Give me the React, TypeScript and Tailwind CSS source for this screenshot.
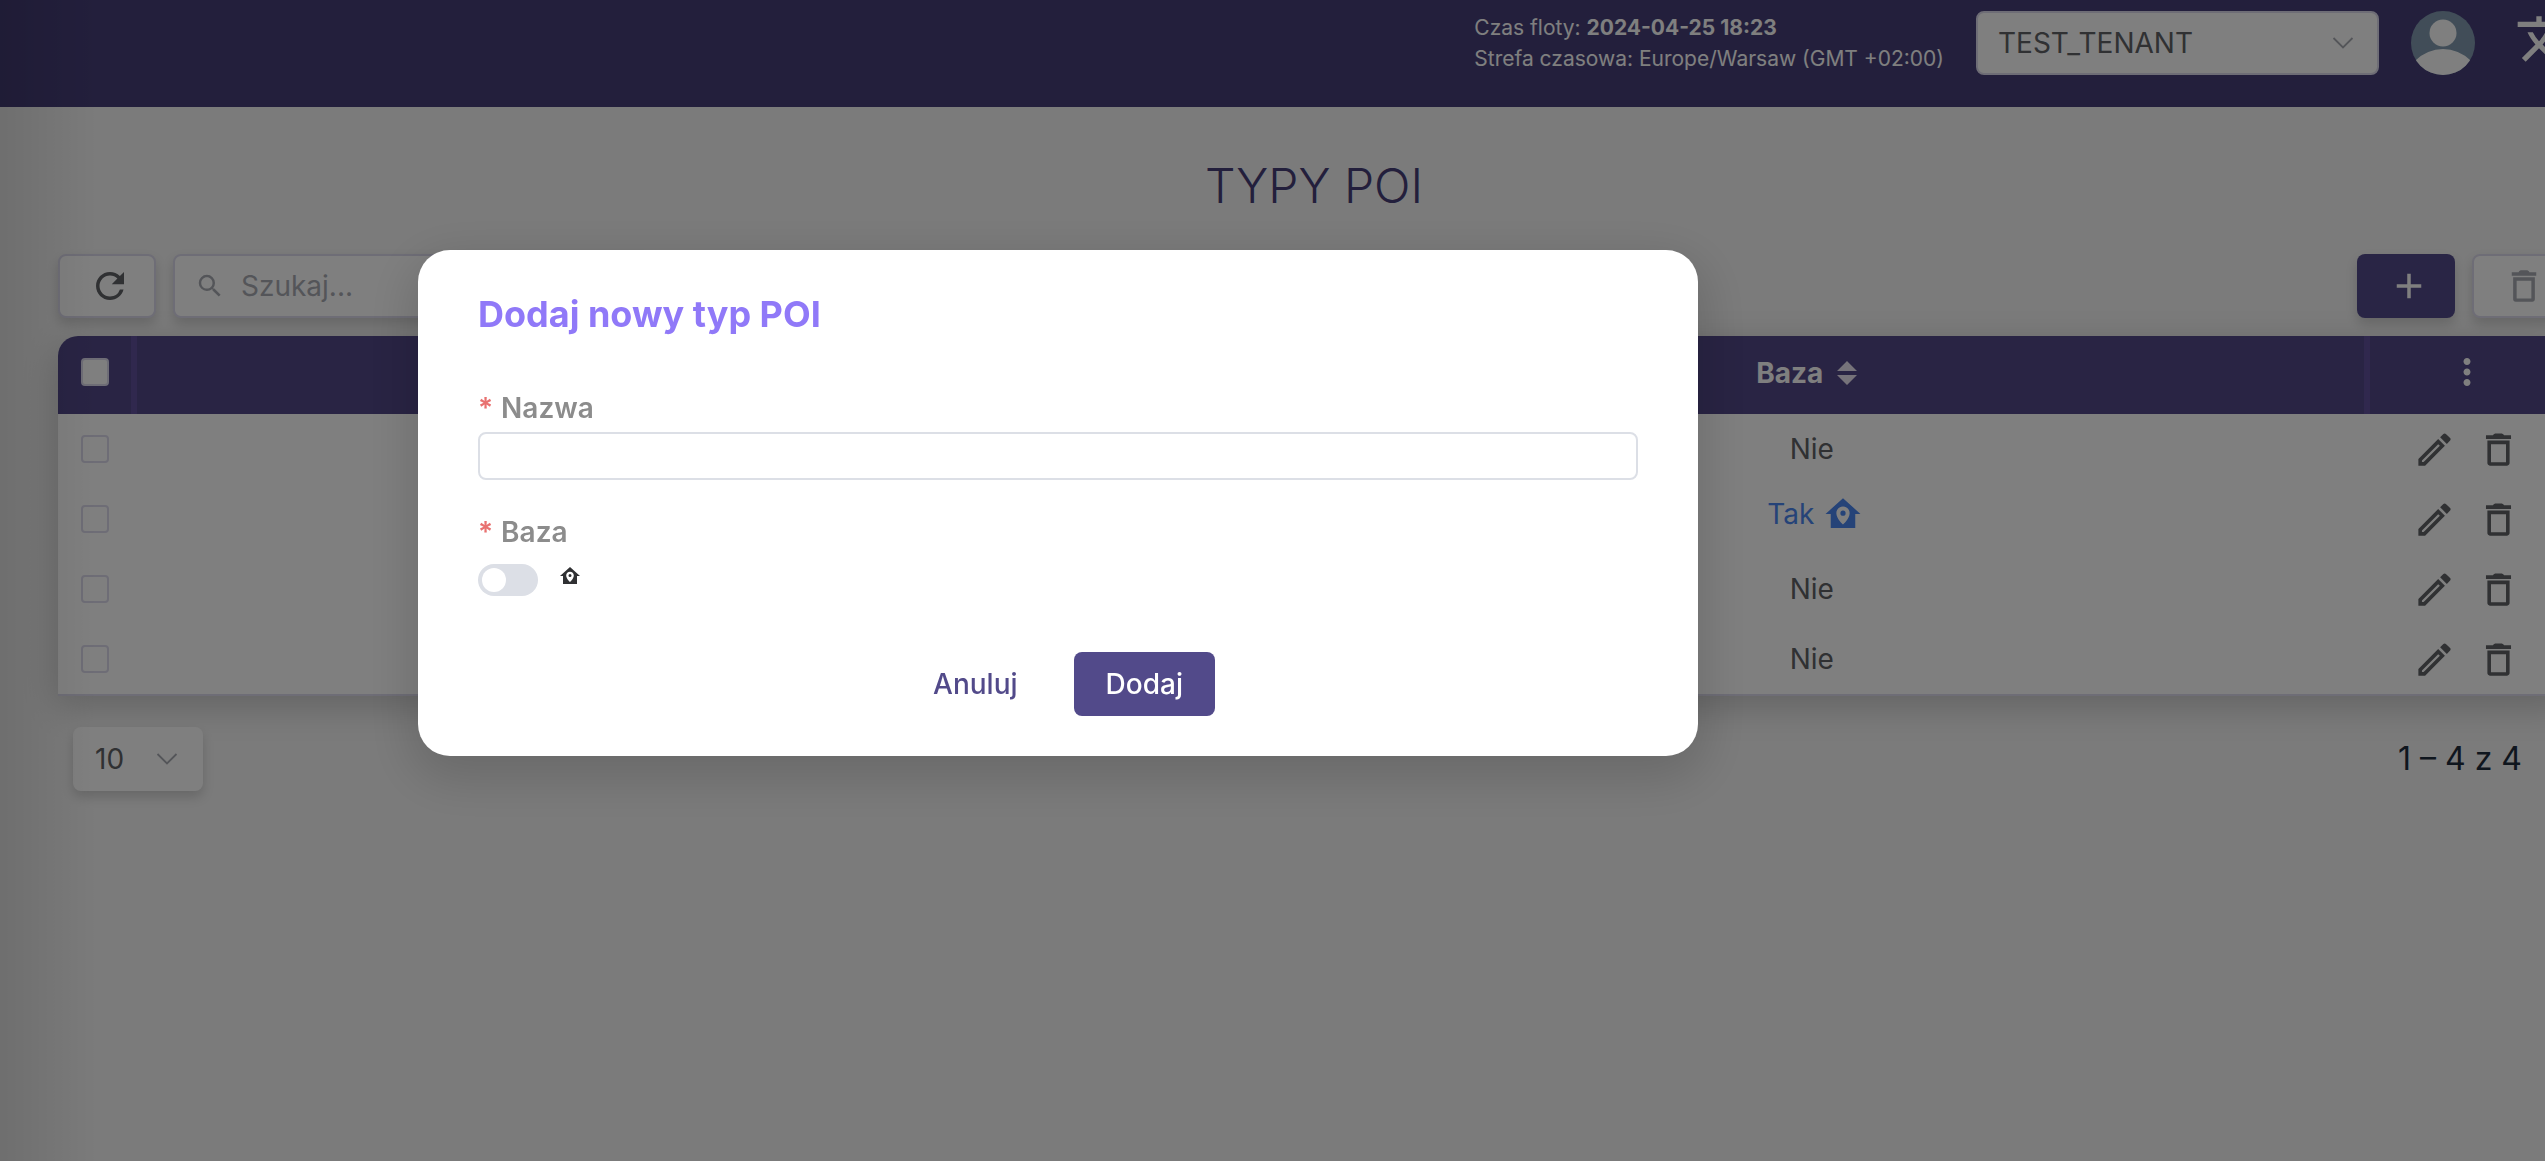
import { useState } from "react";
import { clsx } from "clsx";
import { MdAdd, MdMoreVert, MdRefresh, MdSearch, MdTranslate } from "react-icons/md";

type PoiType = {
  id: number;
  isBase: boolean;
};

const poiTypes: PoiType[] = [
  { id: 1, isBase: false },
  { id: 2, isBase: true },
  { id: 3, isBase: false },
  { id: 4, isBase: false },
];

type IconProps = { className?: string };

function HomeMarkerIcon({ className }: IconProps) {
  return (
    <svg viewBox="0 0 24 24" fill="currentColor" className={className} aria-hidden="true">
      <path d="M12,3L2,12H5V20H19V12H22L12,3M12,7.7C14.1,7.7 15.8,9.4 15.8,11.5C15.8,14.5 12,18 12,18C12,18 8.2,14.5 8.2,11.5C8.2,9.4 9.9,7.7 12,7.7M12,10A1.5,1.5 0 0,0 10.5,11.5A1.5,1.5 0 0,0 12,13A1.5,1.5 0 0,0 13.5,11.5A1.5,1.5 0 0,0 12,10Z" />
    </svg>
  );
}

function PencilIcon({ className }: IconProps) {
  return (
    <svg viewBox="0 0 24 24" fill="currentColor" className={className} aria-hidden="true">
      <path d="M14.06,9L15,9.94L5.92,19H5V18.08L14.06,9M17.66,3C17.41,3 17.15,3.1 16.96,3.29L15.13,5.12L18.88,8.87L20.71,7.04C21.1,6.65 21.1,6 20.71,5.63L18.37,3.29C18.17,3.09 17.92,3 17.66,3M14.06,6.19L3,17.25V21H6.75L17.81,9.94L14.06,6.19Z" />
    </svg>
  );
}

function TrashIcon({ className }: IconProps) {
  return (
    <svg viewBox="0 0 24 24" fill="currentColor" fillRule="evenodd" className={className} aria-hidden="true">
      <path d="M5 4.1H8.9C9.2 3.3 9.9 3 10.7 3H13.3C14.1 3 14.8 3.3 15.1 4.1H19V6.2H5ZM5.8 7H18.2V19.6C18.2 20.4 17.6 21 16.8 21H7.2C6.4 21 5.8 20.4 5.8 19.6ZM7.8 9V19.1H16.2V9Z" />
    </svg>
  );
}

function ChevronIcon({ className }: IconProps) {
  return (
    <svg viewBox="0 0 24 24" fill="none" stroke="currentColor" strokeWidth="1.8" className={className} aria-hidden="true">
      <path d="M2.5 7L12 16.5L21.5 7" />
    </svg>
  );
}

function SortIcon() {
  return (
    <svg viewBox="0 0 20 24" fill="#ece6f4" className="h-6 w-5" aria-hidden="true">
      <path d="M10 0L20 10H0ZM0 14H20L10 24Z" />
    </svg>
  );
}

function Avatar() {
  return (
    <svg viewBox="0 0 64 64" className="size-16" aria-hidden="true">
      <clipPath id="avatar-clip">
        <circle cx="32" cy="32" r="32" />
      </clipPath>
      <g clipPath="url(#avatar-clip)">
        <rect width="64" height="64" fill="#829bb0" />
        <circle cx="32" cy="22" r="13.5" fill="#fff" />
        <circle cx="32" cy="76.6" r="38.6" fill="#fff" />
      </g>
    </svg>
  );
}

function TopBar() {
  return (
    <header className="flex h-[107px] items-start justify-end gap-8 bg-[#463e78] pt-[11px] text-white">
      <div className="pt-px text-[21px] leading-[31px] whitespace-nowrap">
        <p>
          Czas floty: <b className="font-bold">2024-04-25 18:23</b>
        </p>
        <p>Strefa czasowa: Europe/Warsaw (GMT +02:00)</p>
      </div>
      <div className="relative">
        <select
          aria-label="Tenant"
          className="h-16 w-[403px] appearance-none rounded-lg border-2 border-[#dcdaec] bg-white px-5 text-[28px] text-[#606266]"
        >
          <option>TEST_TENANT</option>
        </select>
        <ChevronIcon className="pointer-events-none absolute top-5 right-6 size-6 text-[#a8abb2]" />
      </div>
      <button type="button" aria-label="Konto">
        <Avatar />
      </button>
      <button type="button" aria-label="Język" className="-mr-[34px] ml-2 shrink-0">
        <MdTranslate className="size-16" />
      </button>
    </header>
  );
}

const toolButton = "flex h-16 w-[98px] items-center justify-center rounded-lg pl-[6px] shadow-[0_6px_12px_rgba(0,0,0,0.16)]";

function Toolbar() {
  return (
    <div className="flex gap-[17px]">
      <button type="button" aria-label="Odśwież" className={clsx(toolButton, "border-2 border-[#dcdaec] bg-white text-[#606266]")}>
        <MdRefresh className="size-[42px]" />
      </button>
      <label className="flex h-16 w-[480px] items-center rounded-lg border-2 border-[#dcdaec] bg-white pl-5 shadow-[0_6px_12px_rgba(0,0,0,0.16)]">
        <MdSearch className="size-[30px] shrink-0 text-[#a8abb2]" />
        <input
          aria-label="Szukaj"
          placeholder="Szukaj..."
          className="ml-4 w-full bg-transparent text-[28px] outline-none placeholder:text-[#a8abb2]"
        />
      </label>
      <button type="button" aria-label="Dodaj typ POI" className={clsx(toolButton, "ml-auto bg-[#524a8a] text-white")}>
        <MdAdd className="size-[42px]" />
      </button>
      <button type="button" aria-label="Usuń zaznaczone" disabled className={clsx(toolButton, "border-2 border-[#dcdaec] bg-white text-[#a8abb2]")}>
        <TrashIcon className="size-[42px]" />
      </button>
    </div>
  );
}

const checkbox = "block size-7 appearance-none rounded-sm border-2 border-[#dcdaec] bg-white";

function PoiTable() {
  return (
    <div className="mt-[18px] overflow-hidden rounded-t-[20px] border-b-2 border-[#dcdaec] bg-white shadow-[0_10px_36px_rgba(0,0,0,0.2)]">
      <table className="w-full table-fixed border-separate border-spacing-0 text-[28px] leading-10">
        <thead className="bg-[#524888] text-white">
          <tr className="h-[78px]">
            <th className="w-[79px] border-r-6 border-[#60509c] p-0 pb-[6px] pl-[23px]">
              <input type="checkbox" aria-label="Zaznacz wszystkie" className={checkbox} />
            </th>
            <th aria-label="Nazwa" />
            <th className="border-r-6 border-[#60509c] p-0 pb-[6px] font-bold">
              <button type="button" className="inline-flex items-center gap-[14px] pr-1 align-middle">
                Baza
                <SortIcon />
              </button>
            </th>
            <th className="w-[200px] p-0 pr-[6px] pb-[6px]">
              <button type="button" aria-label="Kolumny" className="block w-full">
                <MdMoreVert className="mx-auto size-[42px]" />
              </button>
            </th>
          </tr>
        </thead>
        <tbody className="text-[#606266]">
          {poiTypes.map((poi) => (
            <tr key={poi.id} className="h-[70px]">
              <td className="p-0 pl-[23px]">
                <input type="checkbox" aria-label={`Zaznacz wiersz ${poi.id}`} className={checkbox} />
              </td>
              <td />
              <td className="p-0 text-center">
                {poi.isBase ? (
                  <span className="flex items-center justify-center gap-2 pb-[10px] pl-2 text-[#4a86f0]">
                    Tak
                    <HomeMarkerIcon className="size-[42px]" />
                  </span>
                ) : (
                  "Nie"
                )}
              </td>
              <td className="p-0 pr-2">
                <div className="flex items-center justify-center gap-[21px]">
                  <button type="button" aria-label="Edytuj">
                    <PencilIcon className="size-[43px]" />
                  </button>
                  <button type="button" aria-label="Usuń">
                    <TrashIcon className="size-[43px]" />
                  </button>
                </div>
              </td>
            </tr>
          ))}
        </tbody>
      </table>
    </div>
  );
}

function Pagination() {
  return (
    <div className="mt-[31px] flex items-center justify-between pr-12 pl-[15px]">
      <div className="relative">
        <select
          aria-label="Liczba wierszy"
          className="h-16 w-[130px] appearance-none rounded-lg bg-white px-[22px] text-[28px] text-[#606266] shadow-[0_6px_12px_rgba(0,0,0,0.16)]"
        >
          <option>10</option>
        </select>
        <ChevronIcon className="pointer-events-none absolute top-5 right-6 size-6 text-[#a8abb2]" />
      </div>
      <p className="text-[32px] text-[#1f2d3d]">1 – 4 z 4</p>
    </div>
  );
}

function AddTypeDialog() {
  const [name, setName] = useState("");
  const [isBase, setIsBase] = useState(false);

  return (
    <div className="fixed inset-0 flex items-start justify-center bg-black/50 pt-[250px] pr-[429px]">
      <form
        role="dialog"
        aria-labelledby="dialog-title"
        onSubmit={(e) => e.preventDefault()}
        className="w-[1280px] rounded-[32px] bg-white px-[60px] pt-10 pb-10 text-[28px] leading-10 shadow-[0_16px_48px_8px_rgba(0,0,0,0.14)]"
      >
        <h2 id="dialog-title" className="text-[36px] leading-[48px] font-bold text-[#9079f8]">
          Dodaj nowy typ POI
        </h2>

        <label htmlFor="poi-name" className="mt-[50px] flex gap-2 font-semibold text-[#8c8c8c]">
          <span className="text-[#e87170]">*</span>
          Nazwa
        </label>
        <input
          id="poi-name"
          value={name}
          onChange={(e) => setName(e.target.value)}
          className="mt-1 block h-12 w-full rounded-lg border-2 border-[#dcdfe6] px-4 text-[#606266] outline-none"
        />

        <label htmlFor="poi-base" className="mt-8 flex gap-2 font-semibold text-[#8c8c8c]">
          <span className="text-[#e87170]">*</span>
          Baza
        </label>
        <div className="mt-3 flex items-start gap-5">
          <input
            id="poi-base"
            type="checkbox"
            role="switch"
            checked={isBase}
            onChange={(e) => setIsBase(e.target.checked)}
            className="h-8 w-[60px] appearance-none rounded-full bg-[#dcdfe6] p-1 before:block before:size-6 before:rounded-full before:bg-white checked:bg-[#524a8a] checked:before:ml-7"
          />
          <HomeMarkerIcon className="size-6 text-[#303133]" />
        </div>

        <div className="mt-14 flex justify-center gap-6 font-medium">
          <button type="button" className="h-16 rounded-lg px-8 text-[#524a8a]">
            Anuluj
          </button>
          <button type="submit" className="h-16 rounded-lg bg-[#524a8a] px-8 text-white">
            Dodaj
          </button>
        </div>
      </form>
    </div>
  );
}

export default function App() {
  return (
    <div className="relative min-h-screen overflow-x-hidden bg-[#f6f6f6] font-['Inter',sans-serif]">
      <TopBar />
      <main className="-mr-[25px] pt-[47px] pl-[58px]">
        <h1 className="mb-9 text-center text-[48px] leading-[64px] font-light text-[#463e78]">TYPY POI</h1>
        <Toolbar />
        <PoiTable />
        <Pagination />
      </main>
      <div className="pointer-events-none absolute inset-y-0 left-0 w-24 bg-linear-to-r from-black/10 to-transparent" />
      <AddTypeDialog />
    </div>
  );
}
